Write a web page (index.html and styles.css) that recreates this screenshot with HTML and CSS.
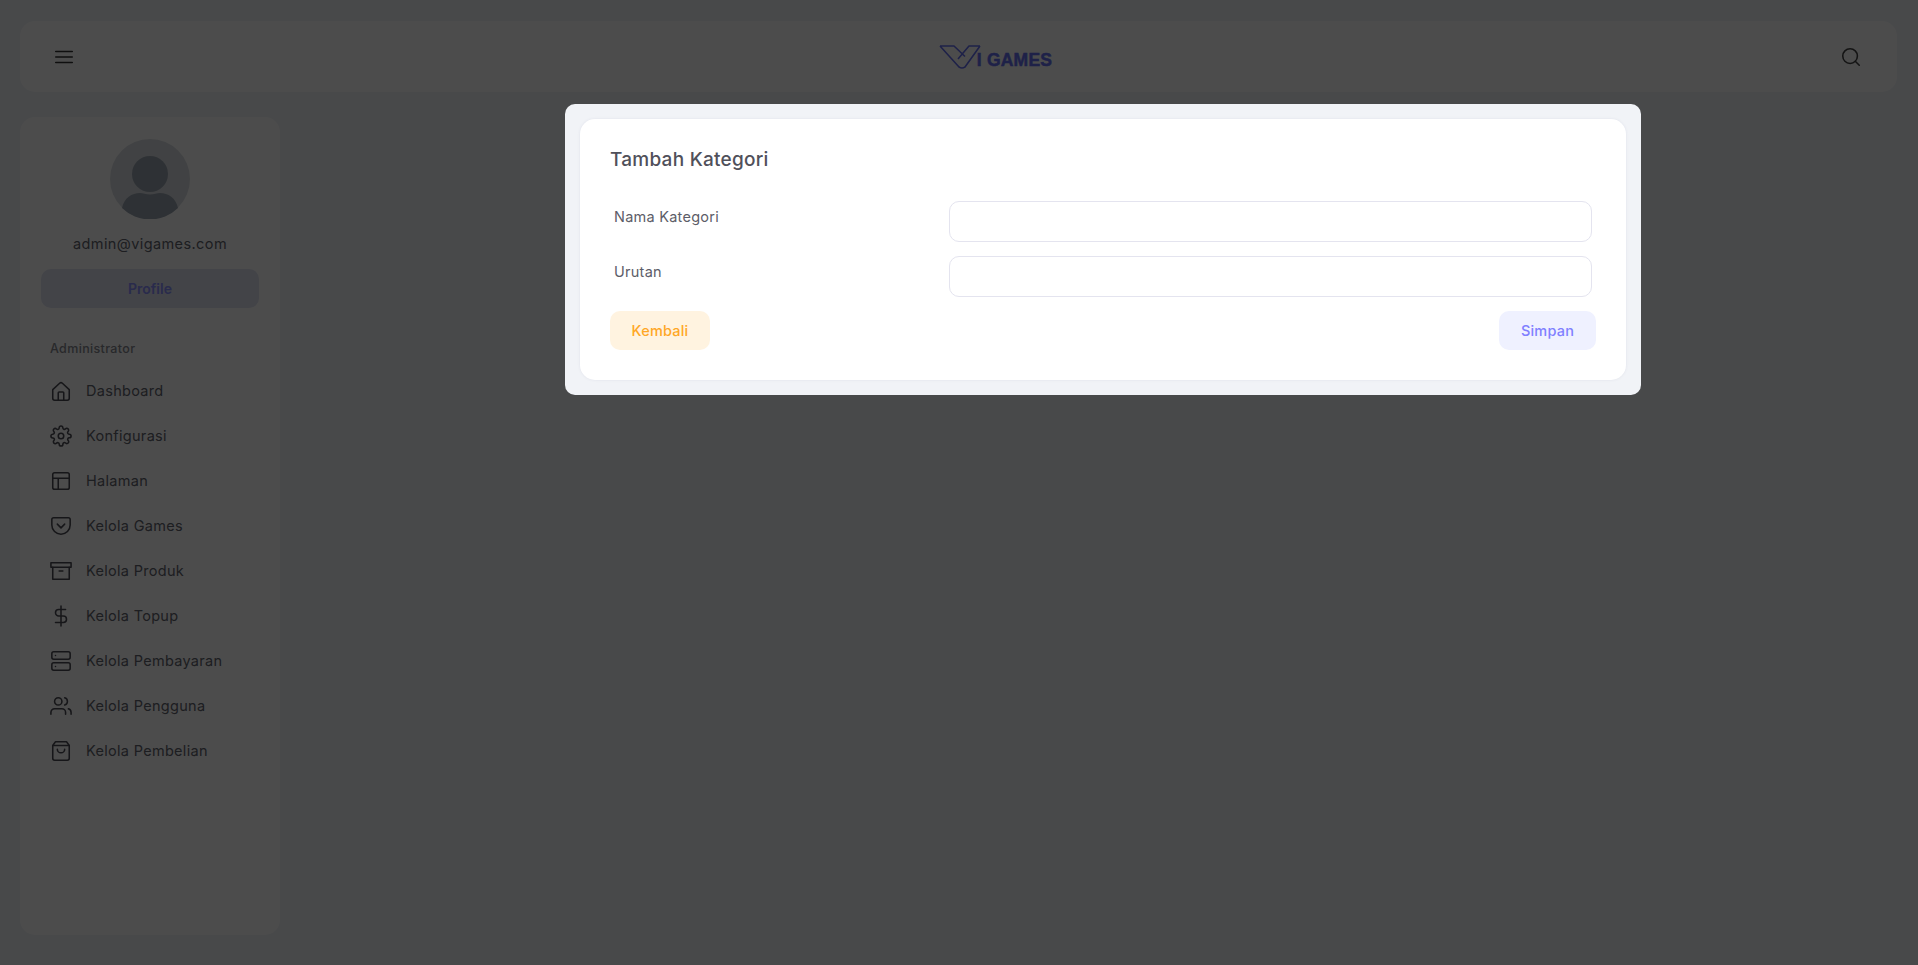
FILE: index.html
```html
<!DOCTYPE html>
<html lang="id">
<head>
<meta charset="utf-8">
<title>Tambah Kategori</title>
<link rel="stylesheet" href="styles.css">
</head>
<body>
<div class="page">
  <header class="topbar">
    <svg class="ico ico-menu" viewBox="0 0 24 24"><path d="M3 6h18M3 12h18M3 18h18"/></svg>
    <div class="logo">
      <svg class="logo-v" viewBox="0 0 42 25"><path d="M1 2h14l11 10.500M41 2H30L19 15M1 2l19 21q3 2 6 0L41 2"/></svg>
      <span class="logo-text">I GAMES</span>
    </div>
    <svg class="ico ico-search" viewBox="0 0 24 24"><circle cx="11" cy="11" r="8"/><path d="M21 21l-4.350-4.350"/></svg>
  </header>
  <aside class="sidebar">
    <div class="profile">
      <svg class="avatar" viewBox="0 0 80 80"><circle class="avatar-bg" cx="40" cy="40" r="40"/><circle class="avatar-fg" cx="40" cy="35" r="18"/><path class="avatar-fg" d="M12 69c2-10 10-15 18-15 3 0 6 1.500 10 1.500s7-1.500 10-1.500c8 0 16 5 18 15a40 40 0 0 1-56 0z"/></svg>
      <div class="email">admin@vigames.com</div>
      <a class="profile-btn">Profile</a>
    </div>
    <div class="nav-title">Administrator</div>
    <nav class="nav">
      <a class="nav-item"><svg class="ico" viewBox="0 0 24 24"><path d="M3 10.500 10.500 3.500a2.200 2.200 0 0 1 3 0L21 10.500V20a2 2 0 0 1-2 2H5a2 2 0 0 1-2-2z"/><path d="M9 22v-8a1 1 0 0 1 1-1h4a1 1 0 0 1 1 1v8"/></svg>Dashboard</a>
      <a class="nav-item"><svg class="ico" viewBox="0 0 24 24"><circle cx="12" cy="12" r="3"/><path d="M19.400 15a1.650 1.650 0 0 0 .33 1.820l.06.06a2 2 0 0 1 0 2.830 2 2 0 0 1-2.830 0l-.06-.06a1.650 1.650 0 0 0-1.820-.33 1.650 1.650 0 0 0-1 1.510V21a2 2 0 0 1-2 2 2 2 0 0 1-2-2v-.09A1.650 1.650 0 0 0 9 19.400a1.650 1.650 0 0 0-1.820.33l-.06.06a2 2 0 0 1-2.830 0 2 2 0 0 1 0-2.830l.06-.06a1.650 1.650 0 0 0 .33-1.820 1.650 1.650 0 0 0-1.510-1H3a2 2 0 0 1-2-2 2 2 0 0 1 2-2h.09A1.650 1.650 0 0 0 4.600 9a1.650 1.650 0 0 0-.33-1.820l-.06-.06a2 2 0 0 1 0-2.830 2 2 0 0 1 2.830 0l.06.06a1.650 1.650 0 0 0 1.820.33H9a1.650 1.650 0 0 0 1-1.510V3a2 2 0 0 1 2-2 2 2 0 0 1 2 2v.09a1.650 1.650 0 0 0 1 1.510 1.650 1.650 0 0 0 1.820-.33l.06-.06a2 2 0 0 1 2.830 0 2 2 0 0 1 0 2.830l-.06.06a1.650 1.650 0 0 0-.33 1.820V9a1.650 1.650 0 0 0 1.510 1H21a2 2 0 0 1 2 2 2 2 0 0 1-2 2h-.09a1.650 1.650 0 0 0-1.510 1z"/></svg>Konfigurasi</a>
      <a class="nav-item"><svg class="ico" viewBox="0 0 24 24"><rect x="3" y="3" width="18" height="18" rx="2"/><path d="M3 9h18M9 21V9"/></svg>Halaman</a>
      <a class="nav-item"><svg class="ico" viewBox="0 0 24 24"><path d="M4 3h16a2 2 0 0 1 2 2v6a10 10 0 0 1-10 10A10 10 0 0 1 2 11V5a2 2 0 0 1 2-2z"/><path d="M8 10l4 4 4-4"/></svg>Kelola Games</a>
      <a class="nav-item"><svg class="ico" viewBox="0 0 24 24"><path d="M21 8v13H3V8"/><rect x="1" y="3" width="22" height="5"/><path d="M10 12h4"/></svg>Kelola Produk</a>
      <a class="nav-item"><svg class="ico" viewBox="0 0 24 24"><path d="M12 1v22M17 5H9.500a3.500 3.500 0 0 0 0 7h5a3.500 3.500 0 0 1 0 7H6"/></svg>Kelola Topup</a>
      <a class="nav-item"><svg class="ico" viewBox="0 0 24 24"><rect x="2" y="2" width="20" height="8" rx="2"/><rect x="2" y="14" width="20" height="8" rx="2"/><path d="M6 6h.01M6 18h.01"/></svg>Kelola Pembayaran</a>
      <a class="nav-item"><svg class="ico" viewBox="0 0 24 24"><path d="M17 21v-2a4 4 0 0 0-4-4H5a4 4 0 0 0-4 4v2"/><circle cx="9" cy="7" r="4"/><path d="M23 21v-2a4 4 0 0 0-3-3.870M16 3.130a4 4 0 0 1 0 7.750"/></svg>Kelola Pengguna</a>
      <a class="nav-item"><svg class="ico" viewBox="0 0 24 24"><path d="M6 2 3 6v14a2 2 0 0 0 2 2h14a2 2 0 0 0 2-2V6l-3-4z"/><path d="M3 6h18M16 10a4 4 0 0 1-8 0"/></svg>Kelola Pembelian</a>
    </nav>
  </aside>
</div>
<div class="overlay">
  <div class="modal">
    <div class="card">
      <h2 class="card-title">Tambah Kategori</h2>
      <form class="form">
        <div class="form-row"><label class="form-label">Nama Kategori</label><input class="form-input" type="text"></div>
        <div class="form-row"><label class="form-label">Urutan</label><input class="form-input" type="text"></div>
        <div class="form-actions">
          <button type="button" class="btn btn-back">Kembali</button>
          <button type="button" class="btn btn-save">Simpan</button>
        </div>
      </form>
    </div>
  </div>
</div>
</body>
</html>
```
FILE: styles.css
```css
* { box-sizing: border-box; }
html, body { margin: 0; height: 100%; overflow: hidden; }
body { background: #f0f3f8; font-family: "Inter", "Open Sans", sans-serif; color: #3f4254; }
.page { display: flex; flex-direction: column; gap: 25px; padding: 21px 21px 30px 20px; height: 965px; }
.topbar { height: 71px; flex: none; background: #fff; border-radius: 15px; display: flex; align-items: center; justify-content: space-between; padding: 0 35px 0 33px; }
.ico { width: 22px; height: 22px; flex: none; fill: none; stroke: #4c4c54; stroke-width: 1.700; stroke-linecap: round; stroke-linejoin: round; }
.ico-menu { stroke: #333; }
.ico-search { stroke: #444; }
.logo { display: flex; align-items: flex-end; margin-left: 76px; }
.logo-v { width: 42px; height: 25px; fill: none; stroke: #6670f0; stroke-width: 1.600; stroke-linejoin: round; }
.logo-text { font-family: "Liberation Sans", Arial, sans-serif; font-weight: 700; font-size: 17.500px; line-height: 18px; letter-spacing: .2px; color: #6670f0; -webkit-text-stroke: .5px #6670f0; margin-left: -4px; }
.sidebar { width: 260px; flex: 1; background: #fff; border-radius: 15px; padding: 22px 21px; }
.profile { display: flex; flex-direction: column; align-items: center; }
.avatar { width: 80px; height: 80px; }
.avatar-bg { fill: #dadee3; }
.avatar-fg { fill: #9ba5b2; }
.email { margin-top: 15px; font-size: 14.500px; line-height: 20px; letter-spacing: .4px; color: #62646e; }
.profile-btn { margin-top: 15px; width: 100%; height: 39px; display: flex; align-items: center; justify-content: center; background: #e0e3f2; border-radius: 10px; font-size: 14px; font-weight: 600; color: #8a90ff; }
.nav-title { margin: 31px 0 0 9px; font-size: 12.500px; line-height: 20px; letter-spacing: .35px; font-weight: 500; color: #86888f; }
.nav { margin-top: 9px; display: flex; flex-direction: column; }
.nav-item { height: 45px; display: flex; align-items: center; gap: 14px; padding-left: 9px; font-size: 14.500px; letter-spacing: .3px; color: #62646e; }
.overlay { position: fixed; inset: 0; padding: 104px 277px 0 565px; background: rgba(0, 0, 0, .7); backdrop-filter: blur(.6px); }
.modal { width: 1076px; height: 291px; background: #f1f3f7; border-radius: 10px; padding: 15px; }
.card { height: 100%; background: #fff; border-radius: 15px; box-shadow: 0 0 3px rgba(80, 80, 130, .1); padding: 30px 30px 0; }
.card-title { margin: 0; font-size: 19px; line-height: 22px; letter-spacing: .25px; font-weight: 500; color: #50505a; }
.form { margin-top: 30px; }
.form-row { display: flex; justify-content: space-between; height: 41px; margin-bottom: 14px; padding: 0 4px; }
.form-label { font-size: 14.500px; line-height: 20px; letter-spacing: .25px; padding-top: 6px; color: #5d5d68; }
.form-input { width: 643px; height: 41px; border: 1px solid #e4e4ef; border-radius: 10px; background: #fff; outline: none; }
.form-actions { display: flex; justify-content: space-between; }
.btn { height: 39px; border: 0; border-radius: 10px; font-family: inherit; font-size: 14.500px; letter-spacing: .2px; font-weight: 500; }
.btn-back { width: 100px; background: #fff3e0; color: #ffa726; }
.btn-save { width: 97px; background: #eff1ff; color: #8080ff; }
```
